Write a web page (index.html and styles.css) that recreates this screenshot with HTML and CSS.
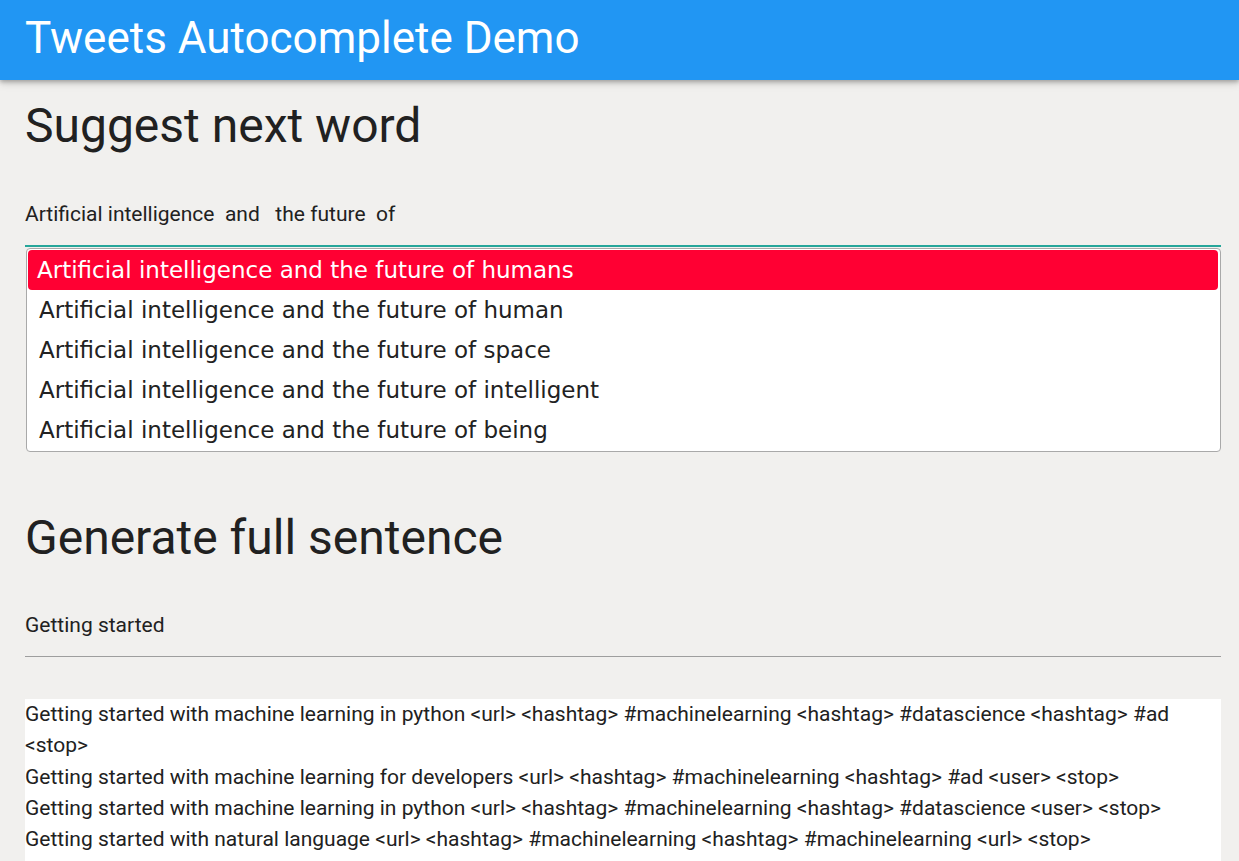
FILE: index.html
```html
<!DOCTYPE html>
<html>
<head>
<meta charset="utf-8">
<link rel="stylesheet" href="styles.css">
</head>
<body>
<header class="appbar"><span class="appbar-title">Tweets Autocomplete Demo</span></header>
<main class="content">
  <h1 class="section-title first">Suggest next word</h1>
  <div class="input-wrap">
    <div class="input-text">Artificial intelligence&nbsp; and &nbsp; the future&nbsp; of</div>
    <div class="input-line focused"></div>
  </div>
  <ul class="suggestions">
    <li class="suggestion active">Artificial intelligence and the future of humans</li>
    <li class="suggestion">Artificial intelligence and the future of human</li>
    <li class="suggestion">Artificial intelligence and the future of space</li>
    <li class="suggestion">Artificial intelligence and the future of intelligent</li>
    <li class="suggestion">Artificial intelligence and the future of being</li>
  </ul>
  <h1 class="section-title second">Generate full sentence</h1>
  <div class="input-wrap plain">
    <div class="input-text">Getting started</div>
    <div class="input-line"></div>
  </div>
  <div class="results">
    <div>Getting started with machine learning in python &lt;url&gt; &lt;hashtag&gt; #machinelearning &lt;hashtag&gt; #datascience &lt;hashtag&gt; #ad &lt;stop&gt;</div>
    <div>Getting started with machine learning for developers &lt;url&gt; &lt;hashtag&gt; #machinelearning &lt;hashtag&gt; #ad &lt;user&gt; &lt;stop&gt;</div>
    <div>Getting started with machine learning in python &lt;url&gt; &lt;hashtag&gt; #machinelearning &lt;hashtag&gt; #datascience &lt;user&gt; &lt;stop&gt;</div>
    <div>Getting started with natural language &lt;url&gt; &lt;hashtag&gt; #machinelearning &lt;hashtag&gt; #machinelearning &lt;url&gt; &lt;stop&gt;</div>
  </div>
</main>
</body>
</html>
```
FILE: styles.css
```css
html, body {
  margin: 0;
  padding: 0;
  background: #f1f0ee;
  font-family: Roboto, "Liberation Sans", sans-serif;
  color: #212121;
  overflow: hidden;
}
.appbar {
  height: 80px;
  background: #2196f3;
  box-shadow: 0 2px 4px rgba(0,0,0,0.25), 0 4px 8px rgba(0,0,0,0.12);
  display: flex;
  align-items: center;
  padding: 0 25px;
  box-sizing: border-box;
  position: relative;
}
.appbar-title {
  color: #fff;
  font-size: 44px;
  font-weight: 400;
  line-height: 1;
  margin-top: -4px;
}
.content {
  padding: 0 18px 0 25px;
}
.section-title {
  font-size: 48px;
  font-weight: 400;
  margin: 0;
  line-height: 48px;
}
.section-title.first { padding-top: 22px; }
.section-title.second { padding-top: 62px; }
.input-wrap { margin-top: 52px; }
.input-wrap.plain { margin-top: 51px; }
.input-text {
  font-size: 21px;
  line-height: 24px;
  padding-bottom: 19px;
}
.input-line {
  height: 1px;
  background: #9e9e9e;
}
.input-line.focused {
  height: 2px;
  background: #26a69a;
}
.suggestions {
  list-style: none;
  margin: 1px 0 0 1px;
  padding: 1px 2px 1px 1px;
  background: #fff;
  border: 1px solid #a9a9a9;
  border-radius: 4px;
  font-family: "DejaVu Sans", Verdana, sans-serif;
}
.suggestion {
  height: 40px;
  line-height: 40px;
  font-size: 23px;
  padding: 0 11px;
  color: #222;
}
.suggestion.active {
  background: #ff0033;
  color: #fff;
  border-radius: 4px;
  padding-left: 9px;
}
.results {
  margin-top: 42px;
  background: #fff;
  font-size: 21px;
  line-height: 31.25px;
  min-height: 200px;
}
```
